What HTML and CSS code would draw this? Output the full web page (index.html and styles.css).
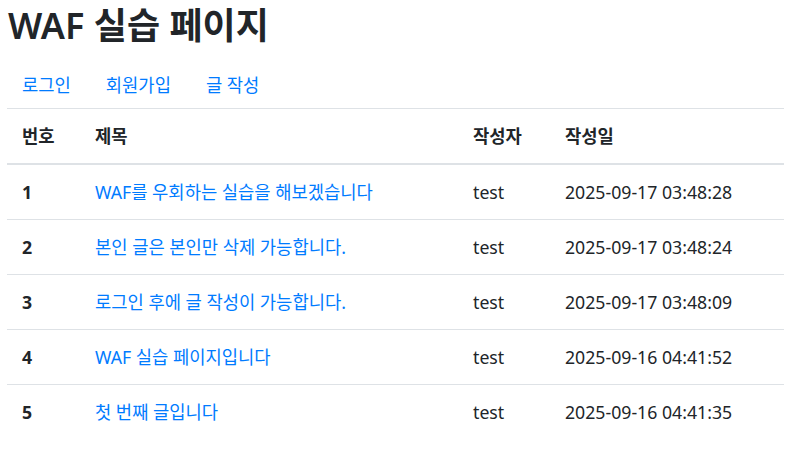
FILE: index.html
```html
<!DOCTYPE html>
<html lang="ko">
<head>
<meta charset="utf-8">
<title>WAF 실습 페이지</title>
<link rel="stylesheet" href="styles.css">
</head>
<body>
<div class="page">
  <h1 class="title">WAF 실습 페이지</h1>
  <nav class="nav">
    <a class="nav-link" href="#">로그인</a>
    <a class="nav-link" href="#">회원가입</a>
    <a class="nav-link" href="#">글 작성</a>
  </nav>
  <table class="board">
    <thead>
      <tr>
        <th class="c-no">번호</th>
        <th class="c-title">제목</th>
        <th class="c-author">작성자</th>
        <th class="c-date">작성일</th>
      </tr>
    </thead>
    <tbody>
      <tr><th>1</th><td><a href="#">WAF를 우회하는 실습을 해보겠습니다</a></td><td>test</td><td>2025-09-17 03:48:28</td></tr>
      <tr><th>2</th><td><a href="#">본인 글은 본인만 삭제 가능합니다.</a></td><td>test</td><td>2025-09-17 03:48:24</td></tr>
      <tr><th>3</th><td><a href="#">로그인 후에 글 작성이 가능합니다.</a></td><td>test</td><td>2025-09-17 03:48:09</td></tr>
      <tr><th>4</th><td><a href="#">WAF 실습 페이지입니다</a></td><td>test</td><td>2025-09-16 04:41:52</td></tr>
      <tr><th>5</th><td><a href="#">첫 번째 글입니다</a></td><td>test</td><td>2025-09-16 04:41:35</td></tr>
    </tbody>
  </table>
</div>
</body>
</html>
```

FILE: styles.css
```css
html, body {
  margin: 0;
  padding: 0;
  background: #fff;
}
body {
  font-family: "Noto Sans", "Noto Sans CJK KR", sans-serif;
  font-size: 17.7px;
  line-height: 24px;
  color: #212529;
}
.page {
  padding: 0 16px 0 7px;
}
.title {
  margin: 0;
  padding: 4px 0 0 1px;
  font-size: 36px;
  font-weight: 600;
  line-height: 43px;
}
.nav {
  display: flex;
  margin-top: 18px;
  height: 40px;
  align-items: center;
}
.nav-link {
  color: #007bff;
  text-decoration: none;
  padding: 0 17px 0 15px;
  margin-right: 3px;
}
.board {
  width: 100%;
  border-collapse: collapse;
  margin-top: 3px;
}
.board th, .board td {
  text-align: left;
  padding: 15px 15px;
  border-top: 1px solid #dee2e6;
  vertical-align: top;
}
.board th {
  font-weight: 700;
}
.board thead th {
  border-bottom: 2px solid #dee2e6;
}
.board a {
  color: #007bff;
  text-decoration: none;
}
.c-no { width: 43px; }
.c-title { width: 348px; }
.c-author { width: 62px; }
```
